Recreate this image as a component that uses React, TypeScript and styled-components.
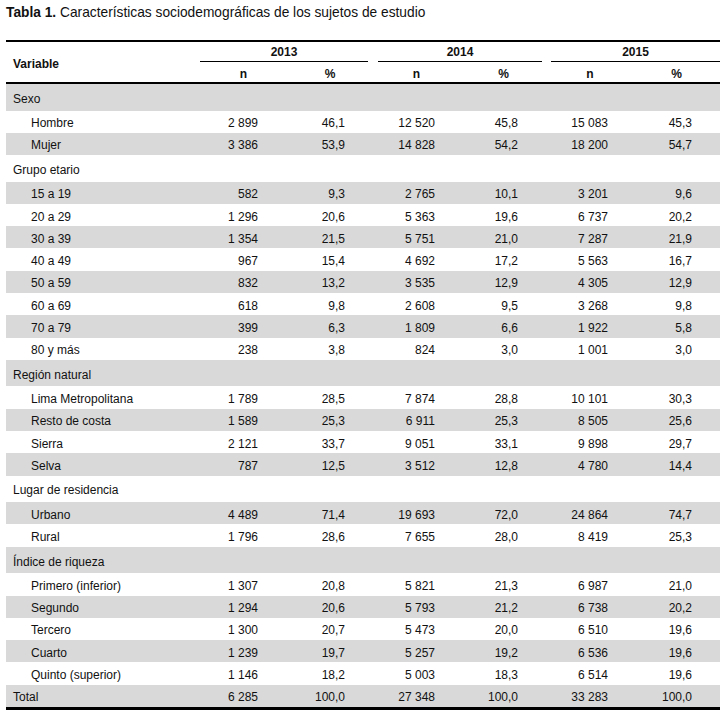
import React from "react";
import styled, { createGlobalStyle } from "styled-components";

const GlobalStyle = createGlobalStyle`
  html, body { margin: 0; padding: 0; background: #ffffff; }
  body { font-family: "Liberation Sans", Arial, sans-serif; color: #111; }
  *, *::before, *::after { box-sizing: border-box; }
`;

const COLS = "194px 87px 86px 87px 87px 86px 87px";

const Page = styled.div`
  padding: 5px 4px 0 6px;
`;

const Title = styled.div`
  font-size: 13.75px;
  line-height: 16px;
  height: 35px;
  color: #111;
  b { font-weight: 700; }
`;

const Table = styled.div`
  width: 714px;
  font-size: 12px;
  line-height: 14px;
  border-top: 2px solid #000;
  border-bottom: 3px solid #000;
`;

const Head = styled.div`
  display: grid;
  grid-template-columns: ${COLS};
  grid-template-rows: 20px 20px;
  border-bottom: 2px solid #000;
  font-weight: 700;
`;

const VarHead = styled.div`
  grid-row: 1 / span 2;
  grid-column: 1;
  align-self: center;
  padding: 3px 0 0 7px;
`;

const YearHead = styled.div<{ $ml: number; $mr: number }>`
  grid-row: 1;
  grid-column: span 2;
  margin: 0 ${(p) => p.$mr}px 0 ${(p) => p.$ml}px;
  border-bottom: 1px solid #000;
  display: flex;
  align-items: center;
  justify-content: center;
  padding-top: 1px;
`;

const SubHead = styled.div`
  grid-row: 2;
  display: flex;
  align-items: center;
  justify-content: center;
  padding-top: 3px;
`;

const Row = styled.div<{ $cat?: boolean; $shade: boolean }>`
  display: grid;
  grid-template-columns: ${COLS};
  align-items: center;
  padding-top: 3px;
  height: ${(p) => (p.$cat ? "26.5px" : "22.3px")};
  background: ${(p) => (p.$shade ? "#d9d9d9" : "transparent")};
`;

const Label = styled.div<{ $indent?: boolean }>`
  padding-left: ${(p) => (p.$indent ? 25 : 7)}px;
  white-space: nowrap;
`;

const Num = styled.div<{ $pr: number }>`
  text-align: right;
  padding-right: ${(p) => p.$pr}px;
`;

type R = { label: string; cat?: boolean; indent?: boolean; v?: string[] };

const rows: R[] = [
  { label: "Sexo", cat: true },
  { label: "Hombre", indent: true, v: ["2 899", "46,1", "12 520", "45,8", "15 083", "45,3"] },
  { label: "Mujer", indent: true, v: ["3 386", "53,9", "14 828", "54,2", "18 200", "54,7"] },
  { label: "Grupo etario", cat: true },
  { label: "15 a 19", indent: true, v: ["582", "9,3", "2 765", "10,1", "3 201", "9,6"] },
  { label: "20 a 29", indent: true, v: ["1 296", "20,6", "5 363", "19,6", "6 737", "20,2"] },
  { label: "30 a 39", indent: true, v: ["1 354", "21,5", "5 751", "21,0", "7 287", "21,9"] },
  { label: "40 a 49", indent: true, v: ["967", "15,4", "4 692", "17,2", "5 563", "16,7"] },
  { label: "50 a 59", indent: true, v: ["832", "13,2", "3 535", "12,9", "4 305", "12,9"] },
  { label: "60 a 69", indent: true, v: ["618", "9,8", "2 608", "9,5", "3 268", "9,8"] },
  { label: "70 a 79", indent: true, v: ["399", "6,3", "1 809", "6,6", "1 922", "5,8"] },
  { label: "80 y más", indent: true, v: ["238", "3,8", "824", "3,0", "1 001", "3,0"] },
  { label: "Región natural", cat: true },
  { label: "Lima Metropolitana", indent: true, v: ["1 789", "28,5", "7 874", "28,8", "10 101", "30,3"] },
  { label: "Resto de costa", indent: true, v: ["1 589", "25,3", "6 911", "25,3", "8 505", "25,6"] },
  { label: "Sierra", indent: true, v: ["2 121", "33,7", "9 051", "33,1", "9 898", "29,7"] },
  { label: "Selva", indent: true, v: ["787", "12,5", "3 512", "12,8", "4 780", "14,4"] },
  { label: "Lugar de residencia", cat: true },
  { label: "Urbano", indent: true, v: ["4 489", "71,4", "19 693", "72,0", "24 864", "74,7"] },
  { label: "Rural", indent: true, v: ["1 796", "28,6", "7 655", "28,0", "8 419", "25,3"] },
  { label: "Índice de riqueza", cat: true },
  { label: "Primero (inferior)", indent: true, v: ["1 307", "20,8", "5 821", "21,3", "6 987", "21,0"] },
  { label: "Segundo", indent: true, v: ["1 294", "20,6", "5 793", "21,2", "6 738", "20,2"] },
  { label: "Tercero", indent: true, v: ["1 300", "20,7", "5 473", "20,0", "6 510", "19,6"] },
  { label: "Cuarto", indent: true, v: ["1 239", "19,7", "5 257", "19,2", "6 536", "19,6"] },
  { label: "Quinto (superior)", indent: true, v: ["1 146", "18,2", "5 003", "18,3", "6 514", "19,6"] },
  { label: "Total", v: ["6 285", "100,0", "27 348", "100,0", "33 283", "100,0"] },
];

const padRight = [29, 28, 25, 29, 25, 28];
const years = [
  { y: "2013", ml: 0, mr: 5 },
  { y: "2014", ml: 5, mr: 5 },
  { y: "2015", ml: 4, mr: 0 },
];

export default function App() {
  return (
    <>
      <GlobalStyle />
      <Page>
        <Title>
          <b>Tabla 1.</b> Características sociodemográficas de los sujetos de estudio
        </Title>
        <Table>
          <Head>
            <VarHead>Variable</VarHead>
            {years.map((y) => (
              <YearHead key={y.y} $ml={y.ml} $mr={y.mr}>
                {y.y}
              </YearHead>
            ))}
            {years.map((y) => (
              <React.Fragment key={y.y}>
                <SubHead>n</SubHead>
                <SubHead>%</SubHead>
              </React.Fragment>
            ))}
          </Head>
          {rows.map((r, idx) => (
            <Row key={r.label} $cat={r.cat} $shade={idx % 2 === 0}>
              <Label $indent={r.indent}>{r.label}</Label>
              {(r.v ?? ["", "", "", "", "", ""]).map((v, i) => (
                <Num key={i} $pr={padRight[i]}>
                  {v}
                </Num>
              ))}
            </Row>
          ))}
        </Table>
      </Page>
    </>
  );
}
